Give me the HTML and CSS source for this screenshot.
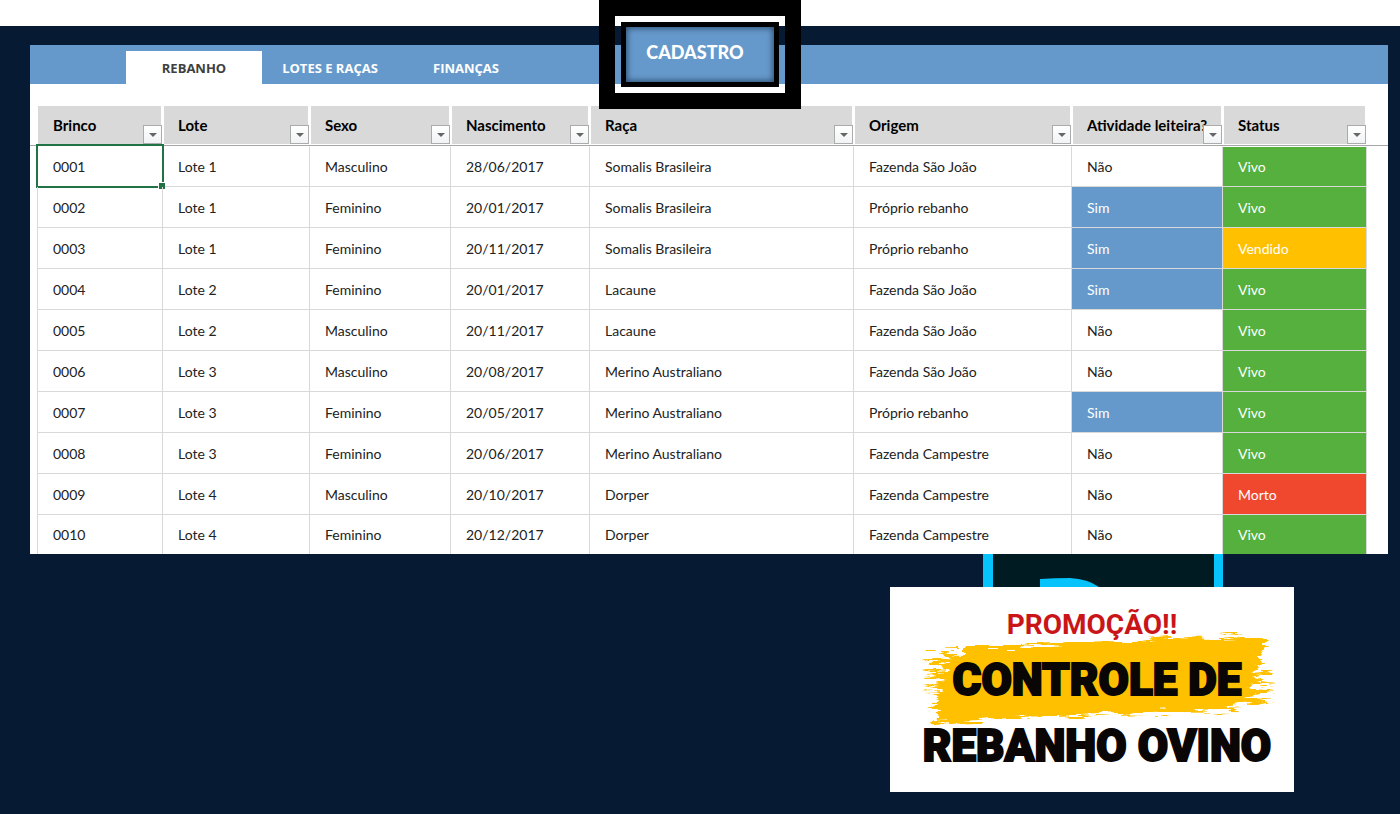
FILE: index.html
```
<!DOCTYPE html>
<html lang="pt-BR">
<head>
  <meta charset="UTF-8">
  <meta name="viewport" content="width=device-width, initial-scale=1.0">
  <title>Controle de Rebanho Ovino</title>
  <link rel="stylesheet" href="styles.css">
</head>
<body>
  <div class="topbar"></div>
  <main class="stage">
    <section class="sheet">
      <nav class="tabs">
        <a href="#rebanho" class="tab active">REBANHO</a>
        <a href="#lotes" class="tab">LOTES E RAÇAS</a>
        <a href="#financas" class="tab">FINANÇAS</a>
      </nav>

      <div class="table-wrap">
        <table class="herd">
          <colgroup>
            <col class="col-brinco">
            <col class="col-lote">
            <col class="col-sexo">
            <col class="col-nasc">
            <col class="col-raca">
            <col class="col-origem">
            <col class="col-leite">
            <col class="col-status">
          </colgroup>
          <thead>
            <tr>
              <th>Brinco<button class="filter" aria-label="Filtrar Brinco"></button></th>
              <th>Lote<button class="filter" aria-label="Filtrar Lote"></button></th>
              <th>Sexo<button class="filter" aria-label="Filtrar Sexo"></button></th>
              <th>Nascimento<button class="filter" aria-label="Filtrar Nascimento"></button></th>
              <th>Raça<button class="filter" aria-label="Filtrar Raça"></button></th>
              <th>Origem<button class="filter" aria-label="Filtrar Origem"></button></th>
              <th>Atividade leiteira?<button class="filter" aria-label="Filtrar Atividade leiteira"></button></th>
              <th>Status<button class="filter" aria-label="Filtrar Status"></button></th>
            </tr>
          </thead>
          <tbody>
            <tr><td class="selected">0001</td><td>Lote 1</td><td>Masculino</td><td>28/06/2017</td><td>Somalis Brasileira</td><td>Fazenda São João</td><td>Não</td><td class="vivo">Vivo</td></tr>
            <tr><td>0002</td><td>Lote 1</td><td>Feminino</td><td>20/01/2017</td><td>Somalis Brasileira</td><td>Próprio rebanho</td><td class="sim">Sim</td><td class="vivo">Vivo</td></tr>
            <tr><td>0003</td><td>Lote 1</td><td>Feminino</td><td>20/11/2017</td><td>Somalis Brasileira</td><td>Próprio rebanho</td><td class="sim">Sim</td><td class="vendido">Vendido</td></tr>
            <tr><td>0004</td><td>Lote 2</td><td>Feminino</td><td>20/01/2017</td><td>Lacaune</td><td>Fazenda São João</td><td class="sim">Sim</td><td class="vivo">Vivo</td></tr>
            <tr><td>0005</td><td>Lote 2</td><td>Masculino</td><td>20/11/2017</td><td>Lacaune</td><td>Fazenda São João</td><td>Não</td><td class="vivo">Vivo</td></tr>
            <tr><td>0006</td><td>Lote 3</td><td>Masculino</td><td>20/08/2017</td><td>Merino Australiano</td><td>Fazenda São João</td><td>Não</td><td class="vivo">Vivo</td></tr>
            <tr><td>0007</td><td>Lote 3</td><td>Feminino</td><td>20/05/2017</td><td>Merino Australiano</td><td>Próprio rebanho</td><td class="sim">Sim</td><td class="vivo">Vivo</td></tr>
            <tr><td>0008</td><td>Lote 3</td><td>Feminino</td><td>20/06/2017</td><td>Merino Australiano</td><td>Fazenda Campestre</td><td>Não</td><td class="vivo">Vivo</td></tr>
            <tr><td>0009</td><td>Lote 4</td><td>Masculino</td><td>20/10/2017</td><td>Dorper</td><td>Fazenda Campestre</td><td>Não</td><td class="morto">Morto</td></tr>
            <tr><td>0010</td><td>Lote 4</td><td>Feminino</td><td>20/12/2017</td><td>Dorper</td><td>Fazenda Campestre</td><td>Não</td><td class="vivo">Vivo</td></tr>
          </tbody>
        </table>
      </div>
    </section>

    <aside class="promo">
      <svg class="promo-logo" viewBox="0 0 240 33" aria-hidden="true">
        <rect width="240" height="33" fill="#001c22"/>
        <rect width="10" height="33" fill="#06c4fb"/>
        <rect x="231" width="10" height="33" fill="#06c4fb"/>
        <path d="M57 25 Q72 24 87 24 Q105 25 116 33 H57 Z" fill="#06c4fb"/>
      </svg>
      <div class="promo-card">
        <svg class="brush" viewBox="0 0 360 96" aria-hidden="true">
          <filter id="rough" x="-5%" y="-10%" width="110%" height="120%">
            <feTurbulence type="fractalNoise" baseFrequency="0.035 0.3" numOctaves="3" seed="8" result="noise"/>
            <feDisplacementMap in="SourceGraphic" in2="noise" scale="16" xChannelSelector="R" yChannelSelector="A"/>
          </filter>
          <g filter="url(#rough)" fill="#ffc000">
            <path d="M46 17 L100 17 L150 14 L205 13 L250 9 L300 10 L350 8 L345 24 L340 30 L347 34 L334 42 L344 50 L328 54 L335 62 L355 62 L325 67 L352 73 L312 76 L322 82 L260 83 L200 85 L140 88 L90 89 L60 92 L14 94 L20 82 L12 78 L22 72 L10 66 L27 60 L8 56 L26 52 L6 44 L30 42 L8 32 L34 30 L22 24 L46 25 Z"/>
            <path d="M2 22 L40 21 L40 24 L8 25 Z M4 33 L35 34 L35 37 L10 36 Z M2 47 L30 46 L28 50 Z M4 62 L28 61 L28 65 Z M330 44 L356 42 L350 46 Z M325 50 L358 54 L330 57 Z M320 58 L360 65 L325 63 Z M320 69 L358 70 L320 74 Z M300 6 L330 4 L320 8 Z"/>
          </g>
        </svg>
        <p class="promo-tag">PROMOÇÃO!!</p>
        <h1 class="promo-title">CONTROLE DE<br>REBANHO OVINO</h1>
      </div>
    </aside>

  </main>

  <div class="highlight">
    <button class="cadastro">CADASTRO</button>
  </div>
</body>
</html>
```
FILE: styles.css
```
* {
  box-sizing: border-box;
}

body {
  position: relative;
  display: flex;
  flex-direction: column;
  margin: 0;
  min-height: 100vh;
  background: #061a33;
  font-family: Lato, "Open Sans", sans-serif;
  font-size: 14px;
  color: #222;
}

.topbar {
  height: 26px;
  background: #fff;
}

.stage {
  padding: 19px 12px 22px 30px;
}

/* Spreadsheet */
.sheet {
  background: #fff;
}

.tabs {
  display: flex;
  align-items: flex-end;
  height: 39px;
  padding-left: 96px;
  background: #6699cb;
}

.tab {
  width: 136px;
  height: 33px;
  line-height: 34px;
  text-align: center;
  font-family: "Open Sans", sans-serif;
  font-size: 13px;
  font-weight: 700;
  color: #fff;
  text-decoration: none;
}

.tab.active {
  background: #fff;
  color: #404040;
}

/* the freeze line runs the full width of the sheet, under the header row */
.table-wrap {
  padding: 22px 21px 0 7px;
  background: linear-gradient(#a6a6a6, #a6a6a6) 0 61px / 100% 1px no-repeat;
}

.herd {
  width: 100%;
  table-layout: fixed;
  border-collapse: separate;
  border-spacing: 0;
}

.col-brinco { width: 126px; }
.col-lote { width: 147px; }
.col-sexo { width: 141px; }
.col-nasc { width: 139px; }
.col-raca { width: 264px; }
.col-origem { width: 218px; }
.col-leite { width: 151px; }
.col-status { width: 144px; }

.herd th {
  position: relative;
  height: 40px;
  padding: 0 0 0 14px;
  border: solid transparent;
  border-width: 0 2px 2px 1px;
  background: #d9d9d9;
  background-clip: padding-box;
  color: #000;
  font-size: 15px;
  font-weight: 700;
  text-align: left;
  white-space: nowrap;
}

.herd td {
  height: 41px;
  padding: 0 0 0 15px;
  border-right: 1px solid #d9d9d9;
  border-bottom: 1px solid #d9d9d9;
}

.herd th:first-child {
  padding-left: 15px;
}

.herd td:first-child {
  position: relative;
  border-left: 1px solid #d9d9d9;
}

.herd tbody tr:first-child td {
  border-top: 1px solid #fff;
}

.herd tbody tr:last-child td {
  height: 39px;
  border-bottom: 0;
}

.filter {
  position: absolute;
  right: -1px;
  bottom: 0;
  width: 19px;
  height: 19px;
  padding: 0;
  border: 1px solid #ababab;
  background: linear-gradient(#fff, #f1f3f6);
}

.filter::after {
  content: '';
  display: block;
  width: 0;
  margin: 1px auto 0;
  border: 4px solid transparent;
  border-top-color: #666;
  border-bottom: 0;
}

.selected::before {
  content: '';
  position: absolute;
  inset: -3px -2px -2px -2px;
  border: 2px solid #217346;
}

.selected::after {
  content: '';
  position: absolute;
  right: -3px;
  bottom: -3px;
  width: 6px;
  height: 6px;
  border: solid #fff;
  border-width: 1px 0 0 1px;
  background: #217346;
}

.herd .sim,
.herd .vivo,
.herd .vendido,
.herd .morto {
  color: #fff;
}

.sim { background: #6699cb; }
.vivo { background: #55b03e; }
.vendido { background: #ffc000; }
.morto { background: #f0472f; }

/* Button with the black frame around it */
.highlight {
  position: absolute;
  top: 0;
  left: 50%;
  margin-left: -101px;
  padding: 6px;
  border: 16px solid #000;
}

.cadastro {
  display: block;
  width: 158px;
  height: 65px;
  padding: 0 10px 6px 0;
  border: 5px solid #000;
  background: #6699cb;
  box-shadow: inset 0 0 6px 1px #27486a;
  color: #fff;
  font-family: Lato, sans-serif;
  font-size: 18px;
  font-weight: 900;
}

/* Promo */
.promo {
  display: flex;
  flex-direction: column;
  width: 404px;
  margin: 0 94px 0 auto;
}

.promo-logo {
  display: block;
  width: 240px;
  height: 33px;
  margin-left: 93px;
}

.promo-card {
  position: relative;
  height: 205px;
  padding-top: 16px;
  background: #fff;
  text-align: center;
  font-family: Roboto, sans-serif;
}

.brush {
  position: absolute;
  top: 42px;
  left: 28px;
  width: 360px;
  height: 96px;
}

.promo-tag,
.promo-title {
  position: relative;
  margin: 0;
}

.promo-tag {
  font-size: 28px;
  line-height: 44px;
  font-weight: 700;
  color: #c91518;
}

.promo-title {
  padding-left: 10px;
  font-size: 44px;
  line-height: 66px;
  font-weight: 900;
  color: #0a0606;
  white-space: nowrap;
  -webkit-text-stroke: 2px #0a0606;
}
```
